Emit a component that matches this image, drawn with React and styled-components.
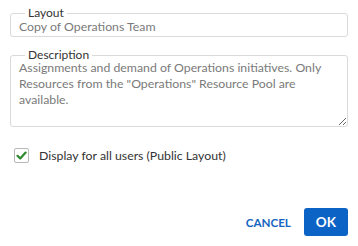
import { createGlobalStyle } from 'styled-components';
import styled from 'styled-components';

const GlobalStyle = createGlobalStyle`
  html, body {
    margin: 0;
    padding: 0;
    background: #ffffff;
  }
  body {
    font-family: Lato, 'Noto Sans', sans-serif;
  }
`;

const Dialog = styled.div`
  width: 358px;
  height: 246px;
  box-sizing: border-box;
  padding: 6px 10px 10px 10px;
  display: flex;
  flex-direction: column;
`;

const Field = styled.fieldset`
  margin: 0 0 ${({ gap }) => gap}px 0;
  padding: 0;
  border: 1px solid #dadada;
  border-radius: 3px;
  min-width: 0;
  position: relative;
`;

const Legend = styled.legend`
  margin-left: 14px;
  padding: 0 3px;
  font-size: 12px;
  line-height: 14px;
  color: #333333;
`;

const TextInput = styled.input`
  display: block;
  width: 100%;
  box-sizing: border-box;
  border: none;
  outline: none;
  background: transparent;
  margin: -2px 0 0 0;
  padding: 0 8px 2px 8px;
  font-family: inherit;
  font-size: 12.3px;
  line-height: 16px;
  height: 18px;
  color: #7a7a7a;
`;

const TextArea = styled.textarea`
  display: block;
  width: 100%;
  height: 66px;
  box-sizing: border-box;
  border: none;
  outline: none;
  background: transparent;
  margin: -2px 0 0 0;
  padding: 0 2px 0 8px;
  font-family: inherit;
  font-size: 12.3px;
  line-height: 16px;
  color: #7a7a7a;
  resize: both;
`;

const CheckRow = styled.label`
  display: flex;
  align-items: center;
  gap: 10px;
  margin: 21px 0 0 4px;
  font-size: 12.3px;
  color: #333333;
`;

const Box = styled.span`
  width: 13px;
  height: 13px;
  border: 1px solid #b8b8b8;
  border-radius: 2px;
  background: #ffffff;
  display: flex;
  align-items: center;
  justify-content: center;
`;

const Actions = styled.div`
  margin-top: auto;
  display: flex;
  justify-content: flex-end;
  align-items: center;
  gap: 13px;
`;

const Button = styled.button`
  font-family: inherit;
  font-weight: 700;
  font-size: ${({ primary }) => (primary ? '13.5px' : '11.6px')};
  height: 28px;
  padding: 0 ${({ primary }) => (primary ? '12px' : '0')};
  min-width: ${({ primary }) => (primary ? '41px' : '0')};
  border: none;
  border-radius: 3px;
  background: ${({ primary }) => (primary ? '#0b63c5' : 'transparent')};
  color: ${({ primary }) => (primary ? '#ffffff' : '#1565c0')};
  cursor: pointer;
`;

export default function App() {
  return (
    <>
      <GlobalStyle />
      <Dialog>
        <Field gap={11}>
          <Legend>Layout</Legend>
          <TextInput defaultValue="Copy of Operations Team" />
        </Field>
        <Field gap={0}>
          <Legend>Description</Legend>
          <TextArea
            defaultValue={
              'Assignments and demand of Operations initiatives. Only Resources from the "Operations" Resource Pool are available.'
            }
          />
        </Field>
        <CheckRow>
          <Box>
            <svg width="11" height="11" viewBox="0 0 11 11">
              <path
                d="M1.5 5.8 L4.2 8.4 L9.6 2.6"
                fill="none"
                stroke="#2f8a2f"
                strokeWidth="2.2"
                strokeLinecap="round"
                strokeLinejoin="round"
              />
            </svg>
          </Box>
          Display for all users (Public Layout)
        </CheckRow>
        <Actions>
          <Button>CANCEL</Button>
          <Button primary>OK</Button>
        </Actions>
      </Dialog>
    </>
  );
}
